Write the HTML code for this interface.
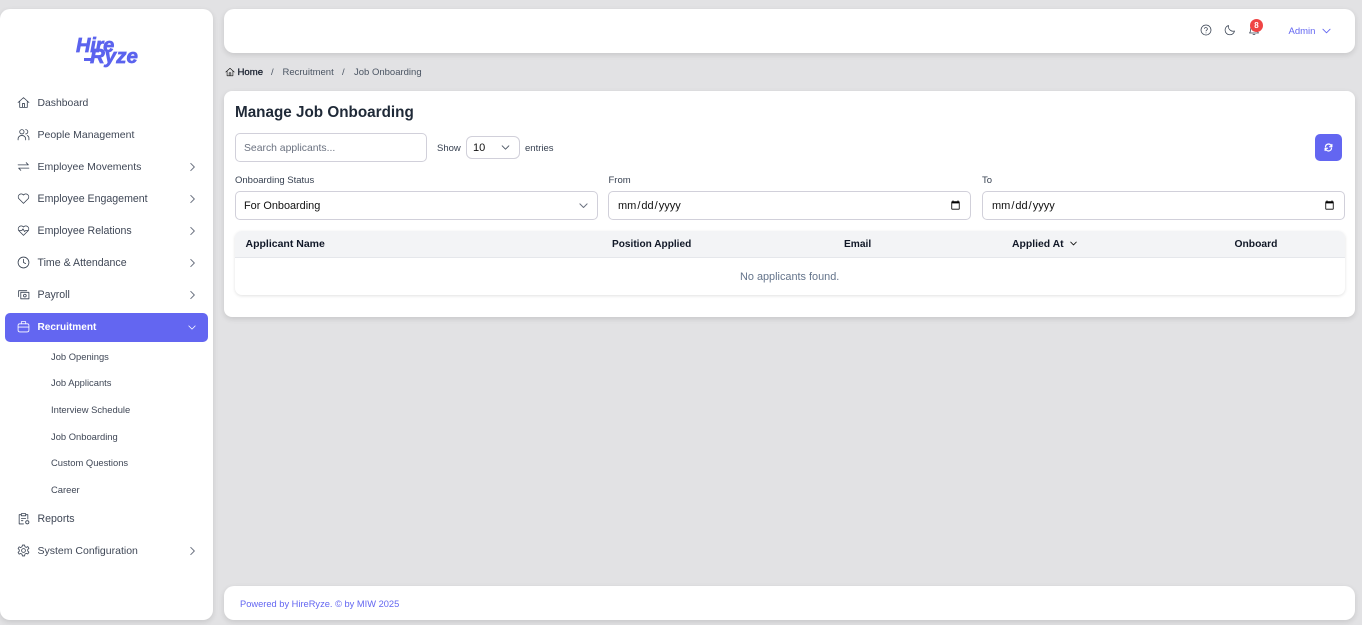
<!DOCTYPE html>
<html lang="en"><head><meta charset="utf-8"><title>Manage Job Onboarding</title>
<style>
*{box-sizing:border-box}
html,body{margin:0;padding:0}
body{width:1362px;height:625px;overflow:hidden;background:#e2e2e4;font-family:"Liberation Sans",sans-serif;position:relative;color:#1f2937}
.card{position:absolute;background:#fff;box-shadow:0 2px 6px rgba(0,0,0,.12)}
.t{position:absolute;white-space:nowrap;line-height:14px}
.nav{font-size:10.6px;color:#3f4756;left:37.5px}
.sub{font-size:9.4px;color:#3f4756;left:51px}
svg{position:absolute;fill:none;stroke:#374151;stroke-width:1.5;stroke-linecap:round;stroke-linejoin:round}
.box{position:absolute;background:#fff;border:1px solid #d1d0da;border-radius:5px}
.lab{font-size:9.5px;color:#374151}
.th{font-weight:bold;color:#111827}
.ch{left:189px;stroke:#6b7280;stroke-width:1.1}
input[type=date]{position:absolute;height:29px;border:1px solid #d1d0da;border-radius:5px;background:#fff;padding:0 7px 0 8px;font:11px "Liberation Sans",sans-serif;color:#111;outline:0}
</style></head><body>

<div class="card" style="left:0;top:9px;width:213px;height:611px;border-radius:10px"></div>
<div class="t" style="left:76px;top:36px;font:italic bold 20px/20px 'Liberation Sans',sans-serif;color:#5b63ee;letter-spacing:-.2px;-webkit-text-stroke:.7px #5b63ee">Hire</div>
<div class="t" style="left:90px;top:47px;font:italic bold 20.5px/19px 'Liberation Sans',sans-serif;color:#5b63ee;letter-spacing:0;-webkit-text-stroke:.7px #5b63ee">Ryze</div>
<div style="position:absolute;left:84px;top:58px;width:10px;height:3px;background:#5b63ee"></div>

<div style="position:absolute;left:5px;top:313px;width:203px;height:29px;border-radius:5px;background:#6366f1"></div>

<svg style="left:16.500px;top:96px" width="13" height="13" viewBox="0 0 24 24" stroke-width="2"><path d="M2 12 12 3l10 9M5 10v11h14V10M10 21v-7h4v7"/></svg>
<svg style="left:16.500px;top:128px" width="13" height="13" viewBox="0 0 24 24" stroke-width="2"><circle cx="9" cy="7" r="4"/><path d="M2 22v-2a6 6 0 0 1 6-6h2a6 6 0 0 1 6 6v2M16 3a4 4 0 0 1 0 8M19 14a5 5 0 0 1 3 5v3"/></svg>
<svg style="left:16.500px;top:160px" width="13" height="13" viewBox="0 0 24 24" stroke-width="2.200"><path d="M2 9h19l-4-4M22 15H3l4 4"/></svg>
<svg style="left:16.500px;top:192px" width="13" height="13" viewBox="0 0 24 24" stroke-width="2.200"><path d="M12 21 3.500 12.500a5.500 5.500 0 0 1 8-7.500l.5.6.5-.6a5.500 5.500 0 0 1 8 7.500z"/></svg>
<svg style="left:16.500px;top:224px" width="13" height="13" viewBox="0 0 24 24" stroke-width="2.400"><path d="M12 21 3.500 12.500a5.500 5.500 0 0 1 8-7.500l.5.6.5-.6a5.500 5.500 0 0 1 8 7.500zM4 12h5l2-3 3 5 2-2h4"/></svg>
<svg style="left:16.500px;top:256px" width="13" height="13" viewBox="0 0 24 24" stroke-width="2.400"><circle cx="12" cy="12" r="10"/><path d="M12 6v6l4 2"/></svg>
<svg style="left:16.500px;top:288px" width="13" height="13" viewBox="0 0 24 24" stroke-width="2.400"><path d="M3 16V5h15M7 8h15v12H7z"/><circle cx="14.500" cy="14" r="2.500"/></svg>
<svg style="left:16.500px;top:320px;stroke:#fff" width="13" height="13" viewBox="0 0 24 24" stroke-width="2.800"><rect x="2" y="7" width="20" height="15" rx="3"/><path d="M8 7V3h8v4M2 13h20M10 13h4"/></svg>
<svg style="left:16.500px;top:512px" width="13" height="13" viewBox="0 0 24 24" stroke-width="2.400"><path d="M12 22H4V5h4M16 5h4v8M8 3h8v4H8zM8 12h8M8 16h3"/><circle cx="19" cy="19" r="3"/></svg>
<svg style="left:16.500px;top:544px" width="13" height="13" viewBox="0 0 24 24" stroke-width="2.400"><circle cx="12" cy="12" r="3.500"/><path d="M10 2h4l.7 3 2.500 1.200 2.800-1.400 2 3.400-2.300 2 .1 2.800 2.200 2-2 3.400-2.800-1.200-2.500 1.400L14 22h-4l-.7-3-2.500-1.400-2.800 1.200-2-3.400 2.200-2 0-2.800L2 8.600l2-3.400 2.800 1.400L9.300 5z"/></svg>

<div class="t nav" style="top:97px;font-size:10.400px">Dashboard</div>
<div class="t nav" style="top:128px;font-size:10.500px">People Management</div>
<div class="t nav" style="top:160px;font-size:10.500px">Employee Movements</div>
<div class="t nav" style="top:192px;font-size:10.600px">Employee Engagement</div>
<div class="t nav" style="top:224px;font-size:10.600px">Employee Relations</div>
<div class="t nav" style="top:256px">Time &amp; Attendance</div>
<div class="t nav" style="top:288px">Payroll</div>
<div class="t nav" style="top:321px;color:#fff;font-weight:bold;font-size:10.100px">Recruitment</div>
<div class="t nav" style="top:512px">Reports</div>
<div class="t nav" style="top:544px;font-size:10.500px">System Configuration</div>

<svg class="ch" style="top:162px" width="8" height="10" viewBox="0 0 9 10"><path d="M2 1l4 4-4 4"/></svg>
<svg class="ch" style="top:194px" width="8" height="10" viewBox="0 0 9 10"><path d="M2 1l4 4-4 4"/></svg>
<svg class="ch" style="top:226px" width="8" height="10" viewBox="0 0 9 10"><path d="M2 1l4 4-4 4"/></svg>
<svg class="ch" style="top:258px" width="8" height="10" viewBox="0 0 9 10"><path d="M2 1l4 4-4 4"/></svg>
<svg class="ch" style="top:290px" width="8" height="10" viewBox="0 0 9 10"><path d="M2 1l4 4-4 4"/></svg>
<svg class="ch" style="top:546px" width="8" height="10" viewBox="0 0 9 10"><path d="M2 1l4 4-4 4"/></svg>
<svg style="left:188px;top:325px;stroke:#fff;stroke-width:1" width="8" height="5" viewBox="0 0 10 6"><path d="M1 1l4 4 4-4"/></svg>

<div class="t sub" style="top:350px">Job Openings</div>
<div class="t sub" style="top:376px">Job Applicants</div>
<div class="t sub" style="top:403px">Interview Schedule</div>
<div class="t sub" style="top:430px">Job Onboarding</div>
<div class="t sub" style="top:456px">Custom Questions</div>
<div class="t sub" style="top:483px">Career</div>

<div class="card" style="left:224px;top:9px;width:1131px;height:44px;border-radius:10px"></div>
<svg style="left:1200px;top:24px" width="12" height="12" viewBox="0 0 24 24" stroke-width="2.400"><circle cx="12" cy="12" r="10"/><path d="M9 9a3 3 0 0 1 5.800 1c0 2-2.800 2.500-2.800 4M12 17.500v.5"/></svg>
<svg style="left:1224px;top:24px" width="12" height="12" viewBox="0 0 24 24" stroke-width="2.400"><path d="M21 14A9.500 9.500 0 0 1 9 3a9.500 9.500 0 1 0 12 11z"/></svg>
<svg style="left:1248px;top:24px" width="12" height="12" viewBox="0 0 24 24" stroke-width="2.400"><path d="M3 18c2-2 2-4 2-7a7 7 0 0 1 14 0c0 3 0 5 2 7zM10 21h4"/></svg>
<div style="position:absolute;left:1250px;top:19px;width:13px;height:13px;border-radius:50%;background:#ef4444;color:#fff;font-size:8px;font-weight:bold;line-height:13px;text-align:center">8</div>
<div class="t" style="left:1288.500px;top:25px;font-size:9.500px;color:#6366f1">Admin</div>
<svg style="left:1322px;top:28px;stroke:#6366f1;stroke-width:1" width="9" height="6" viewBox="0 0 10 6"><path d="M1 1l4 4 4-4"/></svg>

<svg style="left:225px;top:67px;stroke:#111" width="10" height="10" viewBox="0 0 24 24" stroke-width="2.500"><path d="M2 12 12 3l10 9M5 10v11h14V10M10 21v-7h4v7"/></svg>
<div class="t" style="left:237.500px;top:65.500px;font-size:9.600px;color:#111827;-webkit-text-stroke:.2px #111827">Home</div>
<div class="t" style="left:271px;top:65.500px;font-size:9.500px;color:#4b5563">/</div>
<div class="t" style="left:282.500px;top:65.500px;font-size:9.500px;color:#4b5563">Recruitment</div>
<div class="t" style="left:342px;top:65.500px;font-size:9.500px;color:#4b5563">/</div>
<div class="t" style="left:354px;top:65.500px;font-size:9.500px;color:#4b5563">Job Onboarding</div>

<div class="card" style="left:224px;top:91px;width:1131px;height:226px;border-radius:8px"></div>
<div class="t" style="left:235px;top:102.500px;font-size:15.250px;line-height:20px;font-weight:bold;color:#1f2937">Manage Job Onboarding</div>

<div class="box" style="left:235px;top:133px;width:192px;height:29px"></div>
<div class="t" style="left:244px;top:142px;font-size:10.400px;color:#6b7280">Search applicants...</div>
<div class="t lab" style="left:437px;top:142px">Show</div>
<div class="box" style="left:466px;top:136px;width:54px;height:23px;border-radius:6px"></div>
<div class="t" style="left:473px;top:140.500px;font-size:11px;color:#111">10</div>
<svg style="left:501px;top:145px;stroke:#4b5563;stroke-width:1.100" width="9" height="5" viewBox="0 0 10 6"><path d="M1 1l4 4 4-4"/></svg>
<div class="t lab" style="left:525px;top:142px">entries</div>

<div style="position:absolute;left:1315px;top:134px;width:27px;height:27px;border-radius:5px;background:#6366f1"></div>
<svg style="left:1324px;top:142.500px;stroke:#fff;stroke-width:3.200" width="9" height="9" viewBox="0 0 24 24"><path d="M4 10a8 8 0 0 1 15-3l2 3M20 14a8 8 0 0 1-15 3l-2-3M21 4v6h-6M3 20v-6h6"/></svg>

<div class="t lab" style="left:235px;top:173.500px">Onboarding Status</div>
<div class="t lab" style="left:608.500px;top:173.500px">From</div>
<div class="t lab" style="left:982px;top:173.500px">To</div>

<div class="box" style="left:235px;top:191px;width:363px;height:29px"></div>
<div class="t" style="left:244px;top:199px;font-size:10.900px;color:#111">For Onboarding</div>
<svg style="left:578.500px;top:203px;stroke:#6b7280;stroke-width:1.100" width="9" height="5.400" viewBox="0 0 10 6"><path d="M1 1l4 4 4-4"/></svg>
<input type="date" style="left:608px;top:191px;width:363px">
<input type="date" style="left:982px;top:191px;width:363px">

<div style="position:absolute;left:235px;top:231px;width:1110px;height:64px;border-radius:7px;background:#fff;box-shadow:0 1px 3px rgba(0,0,0,.12);overflow:hidden">
  <div style="height:27px;background:#f3f4f6;border-bottom:1px solid #e5e7eb"></div>
</div>
<div class="t th" style="left:245.500px;top:236.500px;font-size:10.500px">Applicant Name</div>
<div class="t th" style="left:612px;top:238px;font-size:10.100px">Position Applied</div>
<div class="t th" style="left:844px;top:238px;font-size:10.200px">Email</div>
<div class="t th" style="left:1012px;top:238px;font-size:10.400px">Applied At</div>
<svg style="left:1070px;top:241px;stroke:#111;stroke-width:1.200" width="7" height="5" viewBox="0 0 10 6"><path d="M1 1l4 4 4-4"/></svg>
<div class="t th" style="left:1234.500px;top:238px;font-size:10.300px">Onboard</div>
<div class="t" style="left:740px;top:270px;font-size:10.900px;color:#64748b">No applicants found.</div>

<div class="card" style="left:224px;top:586px;width:1131px;height:34px;border-radius:10px"></div>
<div class="t" style="left:240px;top:596.500px;font-size:9.300px;color:#6366f1">Powered by HireRyze. © by MIW 2025</div>
</body></html>
